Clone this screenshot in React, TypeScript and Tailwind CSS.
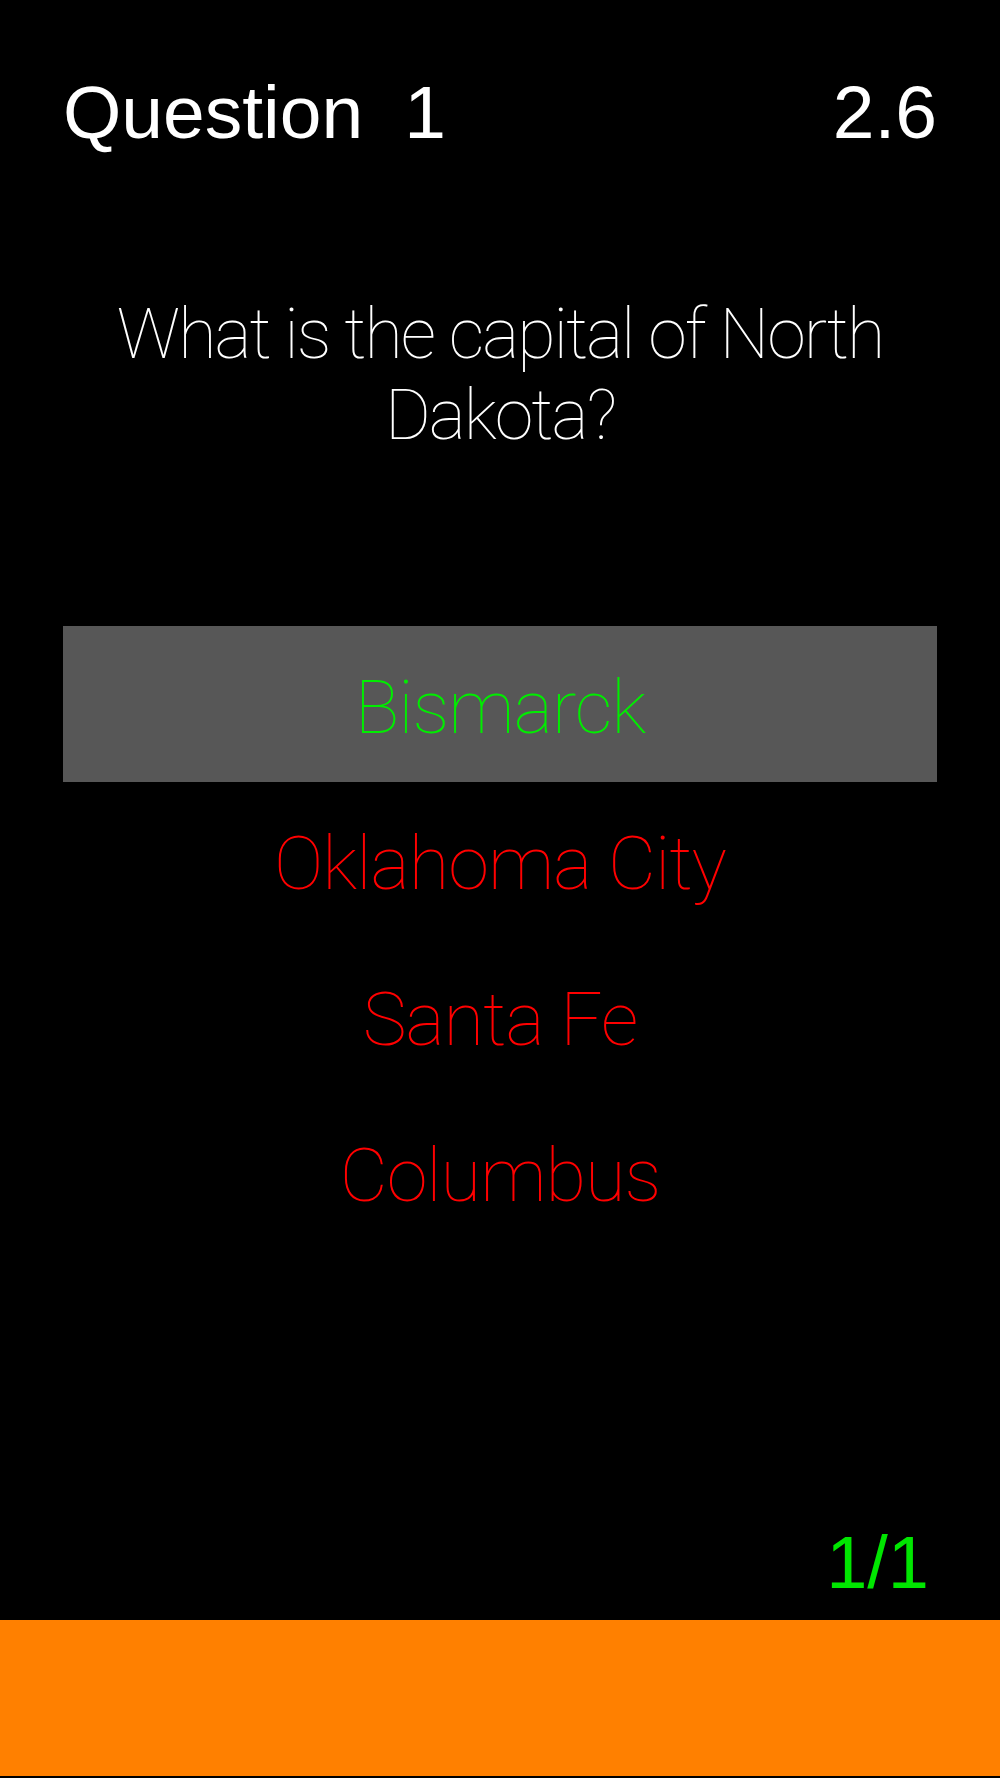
const answers = [
  { label: 'Bismarck', correct: true, selected: true },
  { label: 'Oklahoma City', correct: false, selected: false },
  { label: 'Santa Fe', correct: false, selected: false },
  { label: 'Columbus', correct: false, selected: false },
]

const thin = { fontFamily: 'Roboto, "Liberation Sans", sans-serif' }
const regular = { fontFamily: '"Liberation Sans", Arial, sans-serif' }

export default function App() {
  return (
    <div className="flex h-[1778px] w-[1000px] flex-col bg-black">
      <div className="flex flex-1 flex-col px-[63px]">
        <header className="flex items-start justify-between pt-[75px] text-[75px] leading-none text-white" style={regular}>
          <div className="flex">
            <span>Question</span>
            <span className="ml-[41px]">1</span>
          </div>
          <span>2.6</span>
        </header>

        <p className="mt-[144px] text-center text-[70px] font-thin leading-[81px] tracking-[-2px] text-white" style={thin}>
          What is the capital of North Dakota?
        </p>

        <ul className="mt-[170px]">
          {answers.map((a) => (
            <li
              key={a.label}
              className={`flex h-[156px] items-center justify-center pt-2 text-[74px] font-thin leading-none tracking-[-1px] ${
                a.selected ? 'bg-[#575757]' : ''
              } ${a.correct ? 'text-[#00ee00]' : 'text-[#ff0000]'}`}
              style={thin}
            >
              {a.label}
            </li>
          ))}
        </ul>

        <div className="mt-auto mb-[20px] pr-[8px] text-right text-[74px] leading-none text-[#00e600]" style={regular}>
          1/1
        </div>
      </div>

      <div className="h-[156px] bg-[#ff8000]" />
      <div className="h-[2px] bg-black" />
    </div>
  )
}
